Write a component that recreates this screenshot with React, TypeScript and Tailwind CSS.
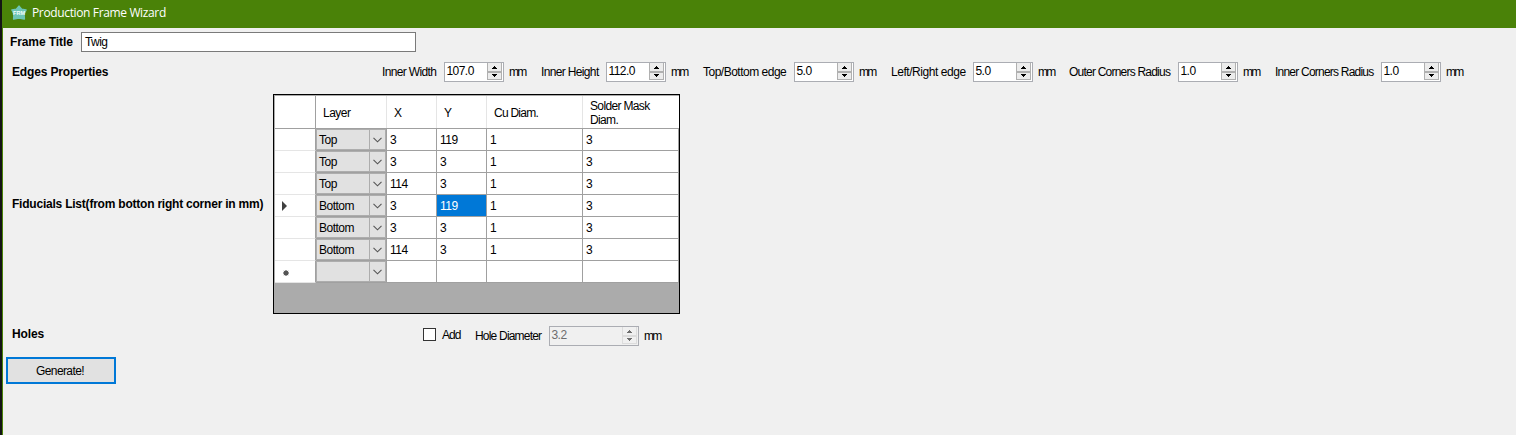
import React from 'react';

const text = "font-['Liberation_Sans',Arial,sans-serif] text-[12px] leading-[14px] whitespace-nowrap";
const bold = "font-['Liberation_Sans',Arial,sans-serif] text-[12px] font-bold leading-[14px] whitespace-nowrap text-black";

function Logo() {
  return (
    <svg width="16" height="16" viewBox="0 0 16 16">
      <path
        d="M8 1.2 L10.6 4.2 L15 5 L13 9 L13.3 14 L8 13 L2.7 14 L3 9 L1 5 L5.4 4.2 Z"
        fill="#6dc5b4"
        stroke="#6dc5b4"
        strokeWidth="1.6"
        strokeLinejoin="round"
      />
      <text x="8" y="10.4" fontSize="6" fontWeight="700" textAnchor="middle" textLength="12" lengthAdjust="spacingAndGlyphs" fontFamily="Liberation Sans" fill="#f4fffc">
        FRM
      </text>
    </svg>
  );
}

function Arrow({ up, color }: { up?: boolean; color: string }) {
  return (
    <svg width="5" height="3" viewBox="0 0 5 3" shapeRendering="crispEdges" fill={color}>
      {up ? <path d="M2 0h1v1h1v1h1v1H0V2h1V1h1z" /> : <path d="M0 0h5v1H4v1H3v1H2V2H1V1H0z" />}
    </svg>
  );
}

function Spinner({ value, width, disabled }: { value: string; width: string; disabled?: boolean }) {
  const color = disabled ? '#6d6d6d' : '#000000';
  const btn = disabled ? 'border-[#dcdcdc] bg-[#f0f0f0]' : 'border-[#b0b0b0] bg-[#ececec]';
  return (
    <div className={`flex h-5 shrink-0 justify-between border border-[#abadb3] ${width} ${disabled ? 'bg-[#f0f0f0]' : 'bg-white'}`}>
      <span className={`${text} pl-[1.5px] pt-[1px] tracking-[-0.55px] ${disabled ? 'text-[#6d6d6d]' : 'text-black'}`}>{value}</span>
      <div className="mr-px flex w-[15px] flex-col">
        <div className={`flex h-[9px] items-center justify-center border border-t-0 ${btn}`}>
          <Arrow up color={color} />
        </div>
        <div className={`flex h-[8px] items-start justify-center border pt-px ${btn}`}>
          <Arrow color={color} />
        </div>
      </div>
    </div>
  );
}

const fields = [
  { label: 'Inner Width', value: '107.0', w: 'w-[62px]', gap: '', tr: 'tracking-[-0.65px]' },
  { label: 'Inner Height', value: '112.0', w: 'w-[65px]', gap: 'ml-[15px]', tr: 'tracking-[-0.65px]' },
  { label: 'Top/Bottom edge', value: '5.0', w: 'w-[91px]', gap: 'ml-[15px]', tr: 'tracking-[-0.5px]' },
  { label: 'Left/Right edge', value: '5.0', w: 'w-[82px]', gap: 'ml-[15px]', tr: 'tracking-[-0.45px]' },
  { label: 'Outer Corners Radius', value: '1.0', w: 'w-[109px]', gap: 'ml-[14px]', tr: 'tracking-[-0.78px]' },
  { label: 'Inner Corners Radius', value: '1.0', w: 'w-[106px]', gap: 'ml-[15px]', tr: 'tracking-[-0.78px]' },
];

const rows = [
  ['Top', '3', '119', '1', '3'],
  ['Top', '3', '3', '1', '3'],
  ['Top', '114', '3', '1', '3'],
  ['Bottom', '3', '119', '1', '3'],
  ['Bottom', '3', '3', '1', '3'],
  ['Bottom', '114', '3', '1', '3'],
  ['', '', '', '', ''],
];

const columns = 'grid grid-cols-[41px_71px_50px_50px_96px_96px]';

function Marker({ index }: { index: number }) {
  if (index === 3) {
    return (
      <svg width="5" height="10" viewBox="0 0 5 10" className="ml-[7px]">
        <path d="M0 0 L5 5 L0 10 Z" fill="#404040" />
      </svg>
    );
  }
  if (index === 6) {
    return (
      <svg width="6" height="6" viewBox="0 0 6 6" className="ml-2 mt-[2px]">
        <circle cx="3" cy="3" r="2.5" fill="#555" />
        <path d="M3 0v6M0 3h6M.8 .8l4.4 4.4M5.2 .8L.8 5.2" stroke="#555" strokeWidth=".7" />
      </svg>
    );
  }
  return null;
}

function Grid() {
  const head = `${text} flex items-center border-r border-[#e5e5e5] pl-[7px] pt-px`;
  return (
    <div className="h-[220px] w-[407px] shrink-0 border border-black bg-[#ababab]">
      <div className="ml-px w-[404px] pt-px">
        <div className={`${columns} h-[33px] border-b border-[#a0a0a0] bg-white`}>
          <div className="border-r border-[#a0a0a0]" />
          <div className={`${head} tracking-[-0.5px]`}>Layer</div>
          <div className={head}>X</div>
          <div className={head}>Y</div>
          <div className={`${head} tracking-[-0.85px]`}>
            <span className="tracking-[-0.75px]">Cu Diam.</span>
          </div>
          <div className={`${text} flex items-center pl-[7px] pt-px leading-[13px] tracking-[-0.65px]`}>
            <span>
              Solder Mask
              <br />
              Diam.
            </span>
          </div>
        </div>
        {rows.map((row, i) => (
          <div key={i} className={`${columns} h-[22px] bg-white`}>
            <div className="flex items-center border-b border-r border-b-[#e5e5e5] border-r-[#a0a0a0]">
              <Marker index={i} />
            </div>
            <div className="flex border-b border-r border-[#a0a0a0]">
              <div className="flex flex-1 border border-[#adadad] bg-[#e1e1e1]">
                <span className={`${text} w-[53px] border-r border-[#adadad] pl-[2px] pt-[3px] tracking-[-0.5px] text-black`}>{row[0]}</span>
                <div className="flex flex-1 items-center justify-center">
                  <svg width="9" height="6" viewBox="0 0 9 6" fill="none" stroke="#555" strokeWidth="1.1">
                    <path d="M.5 .8 L4.5 4.8 L8.5 .8" />
                  </svg>
                </div>
              </div>
            </div>
            {row.slice(1).map((v, c) => (
              <div
                key={c}
                className={`${text} flex items-center border-b border-r border-[#a0a0a0] pl-[3px] pt-px tracking-[-0.5px] ${
                  i === 3 && c === 1 ? 'bg-[#0078d7] text-white' : 'text-black'
                }`}
              >
                {v}
              </div>
            ))}
          </div>
        ))}
      </div>
    </div>
  );
}

export default function App() {
  return (
    <div className="flex h-[435px] w-[1516px] overflow-hidden bg-[#f0f0f0] text-black">
      <div className="w-[2px] shrink-0 bg-[#141414]" />
      <div className="flex flex-1 flex-col border-l border-[#4a8208]">
        <div className="flex h-7 shrink-0 items-center bg-[#4a8208] pb-[3px] pl-2">
          <Logo />
          <span className="ml-[5px] whitespace-nowrap pt-px font-['Open_Sans','Noto_Sans',sans-serif] text-[12px] leading-4 tracking-[-0.36px] text-white">
            Production Frame Wizard
          </span>
        </div>
        <div className="flex h-6 shrink-0 items-start pl-[7px] pt-1">
          <span className={`${bold} w-[71px] pt-[3px] tracking-[-0.1px]`}>Frame Title</span>
          <div className="h-5 w-[335px] border border-[#7a7a7a] bg-white pl-[3px]">
            <span className={`${text} block pt-[2px] tracking-[-0.6px]`}>Twig</span>
          </div>
        </div>
        <div className="flex h-[42px] shrink-0 items-start pl-[9px] pt-[10px]">
          <span className={`${bold} w-[370px] pt-[3px] tracking-[-0.15px]`}>Edges Properties</span>
          {fields.map((f) => (
            <div key={f.label} className={`flex shrink-0 ${f.gap}`}>
              <span className={`${text} ${f.w} ${f.tr} shrink-0 pt-[3px]`}>{f.label}</span>
              <Spinner value={f.value} width="w-[60px]" />
              <span className={`${text} ml-[5px] w-[17px] pt-[3px] tracking-[-1.7px]`}>mm</span>
            </div>
          ))}
        </div>
        <div className="flex h-[220px] shrink-0 items-center pl-[9px]">
          <span className={`${bold} w-[261px] tracking-[-0.22px]`}>Fiducials List(from botton right corner in mm)</span>
          <Grid />
        </div>
        <div className="flex h-[43px] shrink-0 items-start pl-[9px] pt-3">
          <span className={`${bold} w-[411px] pt-px tracking-[-0.1px]`}>Holes</span>
          <div className="mt-[2px] h-[13px] w-[13px] border border-[#333] bg-white" />
          <span className={`${text} ml-[6px] w-[33px] pt-[2px] tracking-[-1px]`}>Add</span>
          <span className={`${text} w-[74px] pt-[3px] tracking-[-0.8px]`}>Hole Diameter</span>
          <Spinner value="3.2" width="w-[90px]" disabled />
          <span className={`${text} ml-[5px] pt-[3px] tracking-[-1.7px]`}>mm</span>
        </div>
        <button className="ml-[3px] flex h-[27px] w-[110px] shrink-0 items-center justify-center border-2 border-[#0078d7] bg-[#e1e1e1]">
          <span className={`${text} pr-[2px] pt-px tracking-[-0.6px]`}>Generate!</span>
        </button>
      </div>
    </div>
  );
}
